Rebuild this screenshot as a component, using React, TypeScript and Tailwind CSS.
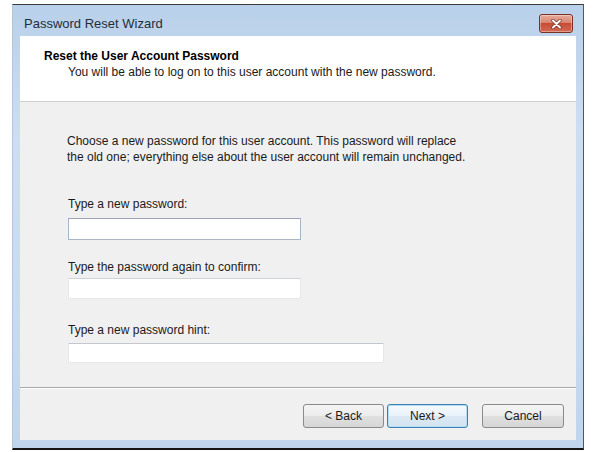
export default function App() {
  const font = { fontFamily: '"Liberation Sans", Arial, sans-serif' };
  return (
    <div className="w-[600px] h-[452px] bg-white pt-[4px] pl-[12px]" style={font}>
      <div className="w-[572px] h-[446px] flex flex-col border-t border-t-[#3b3b3b] border-r border-r-[#4a5868] border-b-2 border-b-[#151515] border-l border-l-[#b3c6dc] bg-[linear-gradient(#b9d0ea,#cddef1_30%,#c8dbf0_70%,#bfd5ee)] px-[7px] pb-[8px]">
        {/* Title bar */}
        <div className="h-[31px] flex justify-between items-start pl-[4px] pr-[3px]">
          <span className="mt-[11px] leading-[16px] text-[13px] text-[#1f2d3d]">Password Reset Wizard</span>
          <div className="mt-[9px] h-[19px] w-[34px] rounded-[3px] border border-[#7a3125] bg-[linear-gradient(#e8ab9c,#d88672_45%,#c64c36_50%,#d36a53)] flex items-center justify-center shadow-[inset_0_0_0_1px_rgba(255,255,255,0.35)]">
            <svg width="11" height="10" viewBox="0 0 11 10">
              <path d="M2 1.5 L9 8.5 M9 1.5 L2 8.5" stroke="#6b2a20" strokeWidth="3.2" strokeLinecap="round" />
              <path d="M2 1.5 L9 8.5 M9 1.5 L2 8.5" stroke="#ffffff" strokeWidth="2" strokeLinecap="round" />
            </svg>
          </div>
        </div>
        {/* Content */}
        <div className="flex-1 flex flex-col bg-[#f0f0f0]">
          <div className="h-[66px] bg-white border-b border-b-[#d0d0d0] pt-[12px] text-[12px] leading-[16px]">
            <div className="pl-[24px] font-bold text-black">Reset the User Account Password</div>
            <div className="pl-[48px] text-[#1a1a1a]">You will be able to log on to this user account with the new password.</div>
          </div>
          <div className="flex-1 flex flex-col text-[12px] leading-[16px] text-[#1a1a1a]">
            <div className="pt-[31px] pl-[47px]">
              <div>Choose a new password for this user account. This password will replace</div>
              <div>the old one; everything else about the user account will remain unchanged.</div>
            </div>
            <div className="mt-[31px] pl-[48px]">Type a new password:</div>
            <div className="mt-[6px] ml-[48px] w-[233px] h-[22px] bg-white border border-[#aab6c6] border-t-[#9aa6b6]" />
            <div className="mt-[19px] pl-[48px]">Type the password again to confirm:</div>
            <div className="mt-[3px] ml-[48px] w-[233px] h-[21px] bg-white border border-[#e6e8ec] border-t-[#cfd3d9]" />
            <div className="mt-[23px] pl-[48px]">Type a new password hint:</div>
            <div className="mt-[5px] ml-[48px] w-[316px] h-[20px] bg-white border border-[#e6e8ec] border-t-[#c4c8ce]" />
            <div className="mt-[24px] h-[2px] border-t border-t-[#a8a8a8] border-b border-b-white" />
            <div className="mt-[15px] flex justify-end pr-[12px]">
              <button className="w-[81px] h-[24px] rounded-[3px] border border-[#8a8a8a] bg-[linear-gradient(#f4f4f4,#ececec_50%,#e0e0e0_50%,#d6d6d6)] text-[12px] text-[#1a1a1a]" style={font}>&lt; Back</button>
              <button className="ml-[3px] w-[81px] h-[24px] rounded-[3px] border border-[#3c7fb1] bg-[linear-gradient(#f4f9fd,#eaf3fa_50%,#dce9f4_50%,#d2e3f1)] shadow-[inset_0_0_0_1px_#b6ddf6] text-[12px] text-[#1a1a1a]" style={font}>Next &gt;</button>
              <button className="ml-[14px] w-[82px] h-[24px] rounded-[3px] border border-[#8a8a8a] bg-[linear-gradient(#f4f4f4,#ececec_50%,#e0e0e0_50%,#d6d6d6)] text-[12px] text-[#1a1a1a]" style={font}>Cancel</button>
            </div>
          </div>
        </div>
      </div>
    </div>
  );
}
